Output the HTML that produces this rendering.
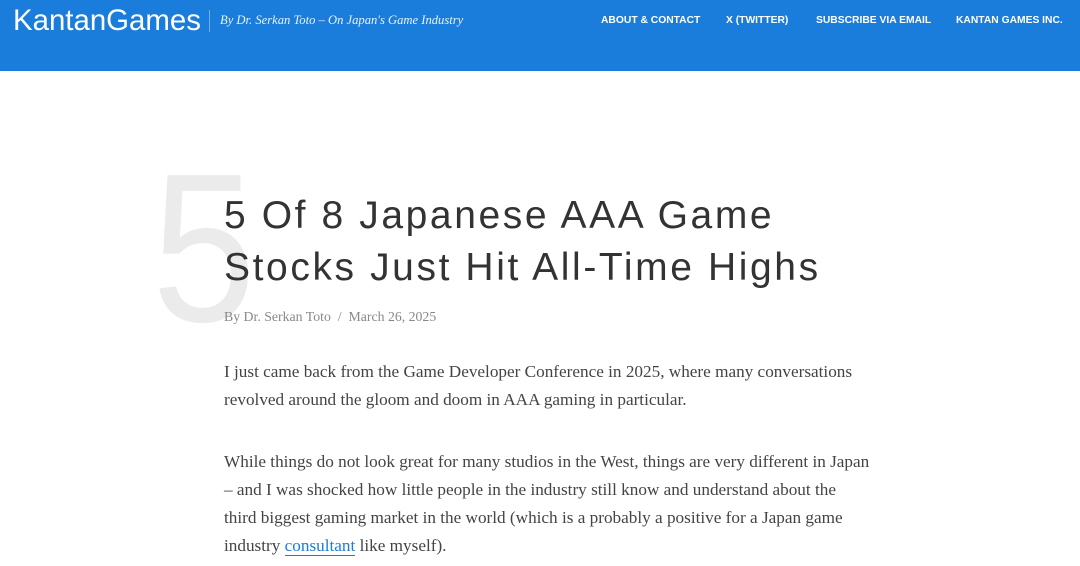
<!DOCTYPE html>
<html><head><meta charset="utf-8"><style>
body{margin:0;width:1080px;height:566px;overflow:hidden;background:#fff;font-family:"Liberation Serif",serif}
.hdr{position:absolute;left:0;top:0;width:1080px;height:71px;background:#1a7ddb}
.logo{position:absolute;left:13px;top:4px;color:#fff;font-family:"Liberation Sans",sans-serif;font-size:30px;transform:scaleX(0.98);transform-origin:0 0}
.sep{position:absolute;left:209px;top:10px;width:1px;height:22px;background:#6fb0ee}
.tag{position:absolute;left:220px;top:13px;color:#e8f2fc;font-style:italic;font-size:12.6px}
.nav{position:absolute;top:15px;color:#fff;font-family:"Liberation Sans",sans-serif;font-size:10.3px;font-weight:bold}
.big5{position:absolute;left:152px;top:142px;font-family:"Liberation Sans",sans-serif;font-size:212px;color:#ebebeb;line-height:1;transform:scaleX(0.88);transform-origin:0 0}
h1{position:absolute;left:224px;top:190px;margin:0;font-family:"Liberation Sans",sans-serif;font-weight:normal;font-size:39px;letter-spacing:2.6px;line-height:52px;color:#333;width:800px}
.meta{position:absolute;left:224px;top:309px;font-size:13.8px;color:#888}
p{position:absolute;left:224px;margin:0;font-size:17.2px;line-height:28px;color:#444;width:700px}
a{color:#1a7ddb;text-decoration:none;border-bottom:1px solid #1a7ddb}
</style></head><body>
<div class="hdr">
<div class="logo">KantanGames</div><div class="sep"></div>
<div class="tag">By Dr. Serkan Toto – On Japan's Game Industry</div>
<div class="nav" style="left:601px">ABOUT &amp; CONTACT</div>
<div class="nav" style="left:726px">X (TWITTER)</div>
<div class="nav" style="left:816px">SUBSCRIBE VIA EMAIL</div>
<div class="nav" style="left:956px">KANTAN GAMES INC.</div>
</div>
<div class="big5">5</div>
<h1>5 Of 8 Japanese AAA Game<br>Stocks Just Hit All-Time Highs</h1>
<div class="meta">By Dr. Serkan Toto &nbsp;/&nbsp; March 26, 2025</div>
<p style="top:358px">I just came back from the Game Developer Conference in 2025, where many conversations<br>revolved around the gloom and doom in AAA gaming in particular.</p>
<p style="top:448px">While things do not look great for many studios in the West, things are very different in Japan<br>– and I was shocked how little people in the industry still know and understand about the<br>third biggest gaming market in the world (which is a probably a positive for a Japan game<br>industry <a>consultant</a> like myself).</p>
</body></html>
